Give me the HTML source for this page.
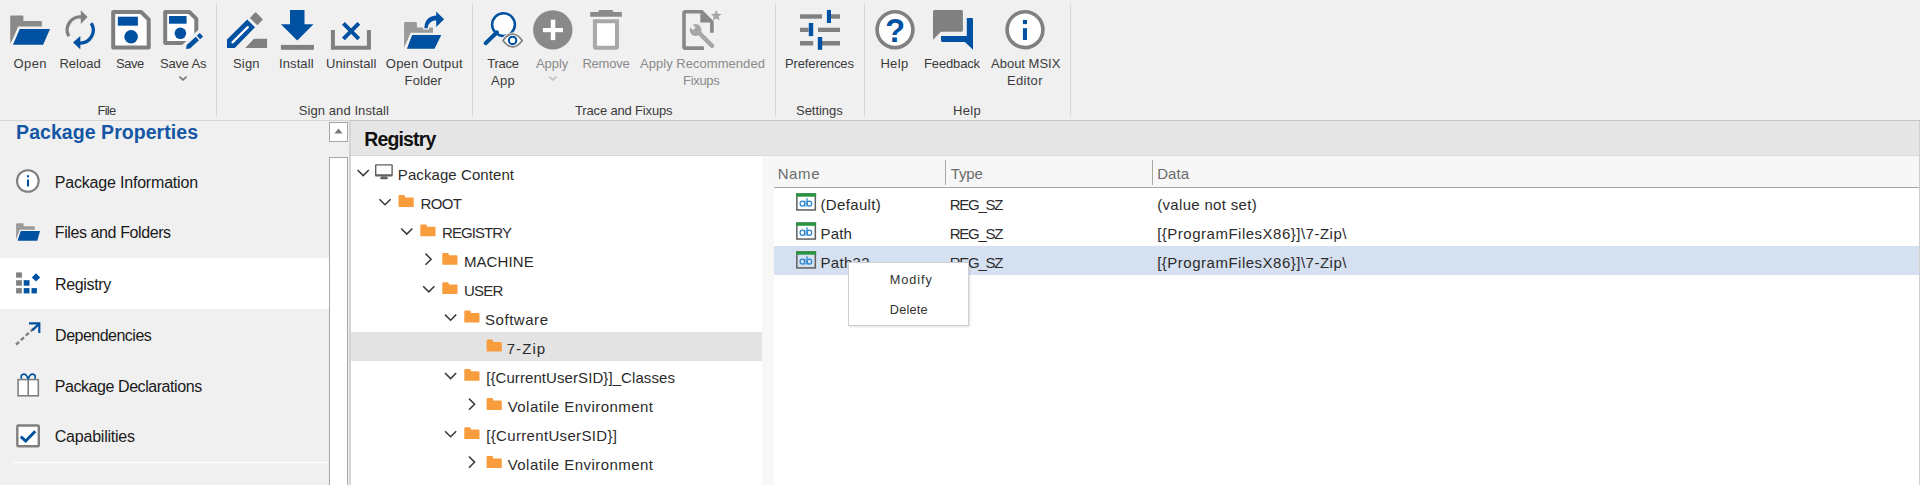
<!DOCTYPE html>
<html><head><meta charset="utf-8"><style>
html,body{margin:0;padding:0;}
body{width:1920px;height:485px;overflow:hidden;position:relative;background:#f0f0f0;font-family:"Liberation Sans", sans-serif;}
.b{position:absolute;}
.t{position:absolute;white-space:pre;font-family:"Liberation Sans", sans-serif;}
</style></head><body>
<!-- ribbon -->
<div class=b style="left:0;top:120px;width:349px;height:1px;background:#d6d6d6"></div>
<div class=b style="left:349px;top:120px;width:1571px;height:1px;background:#c6c6c6"></div>
<div class=b style="left:216px;top:4px;width:1px;height:112px;background:#d6d6d6"></div>
<div class=b style="left:472px;top:4px;width:1px;height:112px;background:#d6d6d6"></div>
<div class=b style="left:775px;top:4px;width:1px;height:112px;background:#d6d6d6"></div>
<div class=b style="left:864px;top:4px;width:1px;height:112px;background:#d6d6d6"></div>
<div class=b style="left:1070px;top:4px;width:1px;height:112px;background:#d6d6d6"></div>
<!-- left panel -->
<div class=b style="left:0;top:258px;width:329px;height:51px;background:#fff"></div>
<div class=b style="left:12px;top:462px;width:316px;height:1px;background:#fff"></div>
<!-- scrollbar -->
<div class=b style="left:329px;top:122px;width:17px;height:18px;background:#fff;border:1px solid #a6a6a6"></div>
<div class=b style="left:329px;top:157px;width:17px;height:340px;background:#fff;border:1px solid #a6a6a6"></div>
<div class=b style="left:349px;top:121px;width:2px;height:364px;background:#d4d4d4"></div>
<!-- header -->
<div class=b style="left:351px;top:121px;width:1568px;height:35px;background:#e6e6e6"></div>
<div class=b style="left:351px;top:155px;width:1568px;height:1px;background:#dadada"></div>
<!-- tree -->
<div class=b style="left:351px;top:156px;width:411px;height:329px;background:#fff"></div>
<div class=b style="left:351px;top:332px;width:411px;height:29px;background:#e3e3e3"></div>
<div class=b style="left:762px;top:156px;width:12px;height:329px;background:#f7f7f7"></div>
<!-- list -->
<div class=b style="left:774px;top:156px;width:1145px;height:31px;background:#f7f7f7"></div>
<div class=b style="left:774px;top:187px;width:1145px;height:1px;background:#a8a8a8"></div>
<div class=b style="left:945px;top:160px;width:1px;height:25px;background:#a8a8a8"></div>
<div class=b style="left:1152px;top:160px;width:1px;height:25px;background:#a8a8a8"></div>
<div class=b style="left:774px;top:188px;width:1145px;height:297px;background:#fff"></div>
<div class=b style="left:774px;top:246px;width:1145px;height:29px;background:#d5e0f1"></div>
<div class=b style="left:1919px;top:121px;width:1px;height:364px;background:#cfcfcf"></div>
<div class=t style="left:13.40px;top:57.00px;font-size:13px;line-height:13px;letter-spacing:0.467px;color:#3b3b3b;">Open</div>
<div class=t style="left:59.40px;top:57.00px;font-size:13px;line-height:13px;letter-spacing:0.040px;color:#3b3b3b;">Reload</div>
<div class=t style="left:116.00px;top:57.00px;font-size:13px;line-height:13px;letter-spacing:-0.467px;color:#3b3b3b;">Save</div>
<div class=t style="left:160.00px;top:57.00px;font-size:13px;line-height:13px;letter-spacing:-0.217px;color:#3b3b3b;">Save As</div>
<div class=t style="left:233.00px;top:57.00px;font-size:13px;line-height:13px;letter-spacing:0.167px;color:#3b3b3b;">Sign</div>
<div class=t style="left:279.00px;top:57.00px;font-size:13px;line-height:13px;letter-spacing:0.100px;color:#3b3b3b;">Install</div>
<div class=t style="left:326.00px;top:57.00px;font-size:13px;line-height:13px;letter-spacing:0.062px;color:#3b3b3b;">Uninstall</div>
<div class=t style="left:385.80px;top:57.00px;font-size:13px;line-height:13px;letter-spacing:0.240px;color:#3b3b3b;">Open Output</div>
<div class=t style="left:404.60px;top:74.00px;font-size:13px;line-height:13px;letter-spacing:0.100px;color:#3b3b3b;">Folder</div>
<div class=t style="left:487.30px;top:57.00px;font-size:13px;line-height:13px;letter-spacing:-0.275px;color:#3b3b3b;">Trace</div>
<div class=t style="left:491.00px;top:74.00px;font-size:13px;line-height:13px;letter-spacing:0.300px;color:#3b3b3b;">App</div>
<div class=t style="left:536.00px;top:57.00px;font-size:13px;line-height:13px;letter-spacing:-0.075px;color:#8a8a8a;">Apply</div>
<div class=t style="left:582.40px;top:57.00px;font-size:13px;line-height:13px;letter-spacing:-0.220px;color:#8a8a8a;">Remove</div>
<div class=t style="left:640.00px;top:57.00px;font-size:13px;line-height:13px;letter-spacing:0.037px;color:#8a8a8a;">Apply Recommended</div>
<div class=t style="left:683.00px;top:74.00px;font-size:13px;line-height:13px;letter-spacing:-0.300px;color:#8a8a8a;">Fixups</div>
<div class=t style="left:785.00px;top:57.00px;font-size:13px;line-height:13px;letter-spacing:-0.120px;color:#3b3b3b;">Preferences</div>
<div class=t style="left:880.40px;top:57.00px;font-size:13px;line-height:13px;letter-spacing:0.333px;color:#3b3b3b;">Help</div>
<div class=t style="left:924.00px;top:57.00px;font-size:13px;line-height:13px;letter-spacing:-0.143px;color:#3b3b3b;">Feedback</div>
<div class=t style="left:991.00px;top:57.00px;font-size:13px;line-height:13px;letter-spacing:0.000px;color:#3b3b3b;">About MSIX</div>
<div class=t style="left:1007.00px;top:74.00px;font-size:13px;line-height:13px;letter-spacing:0.300px;color:#3b3b3b;">Editor</div>
<div class=t style="left:97.50px;top:104.00px;font-size:13px;line-height:13px;letter-spacing:-0.767px;color:#3b3b3b;">File</div>
<div class=t style="left:298.70px;top:104.00px;font-size:13px;line-height:13px;letter-spacing:0.087px;color:#3b3b3b;">Sign and Install</div>
<div class=t style="left:575.00px;top:104.00px;font-size:13px;line-height:13px;letter-spacing:-0.160px;color:#3b3b3b;">Trace and Fixups</div>
<div class=t style="left:796.00px;top:104.00px;font-size:13px;line-height:13px;letter-spacing:-0.043px;color:#3b3b3b;">Settings</div>
<div class=t style="left:953.00px;top:104.00px;font-size:13px;line-height:13px;letter-spacing:0.333px;color:#3b3b3b;">Help</div>
<div class=t style="left:16.10px;top:123.09px;font-size:19.5px;line-height:19.5px;letter-spacing:0.053px;color:#1457a6;font-weight:700;">Package Properties</div>
<div class=t style="left:54.80px;top:174.96px;font-size:16px;line-height:16px;letter-spacing:-0.194px;color:#1a1a1a;">Package Information</div>
<div class=t style="left:54.80px;top:225.46px;font-size:16px;line-height:16px;letter-spacing:-0.400px;color:#1a1a1a;">Files and Folders</div>
<div class=t style="left:55.10px;top:277.06px;font-size:16px;line-height:16px;letter-spacing:-0.371px;color:#1a1a1a;">Registry</div>
<div class=t style="left:55.10px;top:327.66px;font-size:16px;line-height:16px;letter-spacing:-0.509px;color:#1a1a1a;">Dependencies</div>
<div class=t style="left:54.80px;top:378.66px;font-size:16px;line-height:16px;letter-spacing:-0.437px;color:#1a1a1a;">Package Declarations</div>
<div class=t style="left:54.80px;top:429.26px;font-size:16px;line-height:16px;letter-spacing:-0.227px;color:#1a1a1a;">Capabilities</div>
<div class=t style="left:364.20px;top:129.99px;font-size:19.5px;line-height:19.5px;letter-spacing:-0.843px;color:#111;font-weight:700;">Registry</div>
<div class=t style="left:397.80px;top:167.00px;font-size:15px;line-height:15px;letter-spacing:0.079px;color:#2b2b2b;">Package Content</div>
<div class=t style="left:420.40px;top:195.90px;font-size:15px;line-height:15px;letter-spacing:-0.567px;color:#2b2b2b;">ROOT</div>
<div class=t style="left:442.00px;top:224.90px;font-size:15px;line-height:15px;letter-spacing:-0.929px;color:#2b2b2b;">REGISTRY</div>
<div class=t style="left:463.90px;top:253.60px;font-size:15px;line-height:15px;letter-spacing:0.117px;color:#2b2b2b;">MACHINE</div>
<div class=t style="left:463.90px;top:282.90px;font-size:15px;line-height:15px;letter-spacing:-0.767px;color:#2b2b2b;">USER</div>
<div class=t style="left:485.00px;top:311.80px;font-size:15px;line-height:15px;letter-spacing:0.543px;color:#2b2b2b;">Software</div>
<div class=t style="left:506.70px;top:340.70px;font-size:15px;line-height:15px;letter-spacing:1.075px;color:#2b2b2b;">7-Zip</div>
<div class=t style="left:486.20px;top:370.10px;font-size:15px;line-height:15px;letter-spacing:0.080px;color:#2b2b2b;">[{CurrentUserSID}]_Classes</div>
<div class=t style="left:507.70px;top:399.10px;font-size:15px;line-height:15px;letter-spacing:0.447px;color:#2b2b2b;">Volatile Environment</div>
<div class=t style="left:486.20px;top:428.30px;font-size:15px;line-height:15px;letter-spacing:0.335px;color:#2b2b2b;">[{CurrentUserSID}]</div>
<div class=t style="left:507.70px;top:457.10px;font-size:15px;line-height:15px;letter-spacing:0.447px;color:#2b2b2b;">Volatile Environment</div>
<div class=t style="left:777.70px;top:166.20px;font-size:15px;line-height:15px;letter-spacing:0.600px;color:#6b6b6b;">Name</div>
<div class=t style="left:950.80px;top:166.20px;font-size:15px;line-height:15px;letter-spacing:-0.133px;color:#6b6b6b;">Type</div>
<div class=t style="left:1157.20px;top:166.20px;font-size:15px;line-height:15px;letter-spacing:0.067px;color:#6b6b6b;">Data</div>
<div class=t style="left:820.50px;top:196.80px;font-size:15px;line-height:15px;letter-spacing:0.350px;color:#2b2b2b;">(Default)</div>
<div class=t style="left:820.50px;top:225.70px;font-size:15px;line-height:15px;letter-spacing:0.167px;color:#2b2b2b;">Path</div>
<div class=t style="left:820.50px;top:254.60px;font-size:15px;line-height:15px;letter-spacing:0.300px;color:#2b2b2b;">Path32</div>
<div class=t style="left:949.80px;top:196.80px;font-size:15px;line-height:15px;letter-spacing:-1.280px;color:#2b2b2b;">REG_SZ</div>
<div class=t style="left:949.80px;top:225.70px;font-size:15px;line-height:15px;letter-spacing:-1.280px;color:#2b2b2b;">REG_SZ</div>
<div class=t style="left:949.80px;top:254.60px;font-size:15px;line-height:15px;letter-spacing:-1.280px;color:#2b2b2b;">REG_SZ</div>
<div class=t style="left:1157.20px;top:196.80px;font-size:15px;line-height:15px;letter-spacing:0.321px;color:#2b2b2b;">(value not set)</div>
<div class=t style="left:1157.20px;top:225.70px;font-size:15px;line-height:15px;letter-spacing:0.500px;color:#2b2b2b;">[{ProgramFilesX86}]\7-Zip\</div>
<div class=t style="left:1157.20px;top:254.60px;font-size:15px;line-height:15px;letter-spacing:0.500px;color:#2b2b2b;">[{ProgramFilesX86}]\7-Zip\</div>
<svg class=b style="left:0;top:0" width="1920" height="485" viewBox="0 0 1920 485">
<defs>
<g id="fold"><path d="M0 1.2 Q0 0 1.2 0 L5.6 0 Q6.2 0 6.4 0.8 L6.6 2.4 L14 2.4 Q15.2 2.4 15.2 3.6 L15.2 11.9 L0 11.9 Z" fill="#f99c3e"/></g>
<g id="chd"><path d="M0 0 L5.6 5.6 L11.2 0" fill="none" stroke="#383838" stroke-width="1.5"/></g>
<g id="chr"><path d="M0 0 L5.6 5.6 L0 11.2" fill="none" stroke="#383838" stroke-width="1.5"/></g>
<g id="ab"><rect x="0.75" y="0.75" width="18.5" height="15.9" fill="none" stroke="#5e5e5e" stroke-width="1.5"/><rect x="0" y="0" width="20" height="3.4" fill="#2a9440"/><g fill="none" stroke="#2d86cf" stroke-width="1.25"><ellipse cx="6.3" cy="10.3" rx="2.3" ry="2.6"/><path d="M8.7 7.5 L8.7 13.3"/><path d="M10.9 4.9 L10.9 13.3"/><ellipse cx="13.3" cy="10.3" rx="2.3" ry="2.6"/></g></g>
</defs>
<!-- ===== Ribbon icons ===== -->
<!-- Open -->
<path d="M10.2 43.7 L10.2 16.6 Q10.2 15.6 11.2 15.6 L22.6 15.6 Q23.4 15.6 23.4 16.4 L23.4 21 L40.9 21 Q41.9 21 41.9 22 L41.9 27 L19 27 Z" fill="#8a8a8a"/>
<path d="M13 44.7 L19.7 28.9 L50 28.9 L43.1 44.7 Z" fill="#0051a1"/>
<path d="M11.2 45.5 L18.6 27.4 L41.9 27.4" fill="none" stroke="#f0f0f0" stroke-width="1.6"/>
<!-- Reload -->
<path d="M68.8 36.2 A13 13 0 0 1 81.5 17" fill="none" stroke="#808080" stroke-width="3.3"/>
<path d="M80.8 10.2 L87.6 17 L80.8 24 Z" fill="#808080"/>
<path d="M91.2 23.05 A13 13 0 0 1 79.5 43" fill="none" stroke="#0051a1" stroke-width="3.3"/>
<path d="M80.3 35.9 L73 42.6 L80.3 49.3 Z" fill="#0051a1"/>
<!-- Save -->
<path d="M113.2 12.1 L141.3 12.1 L148.7 19.5 L148.7 47.6 L113.2 47.6 Z" fill="#fff" stroke="#7f7f7f" stroke-width="4" stroke-linejoin="round"/>
<rect x="117.8" y="16.7" width="20.1" height="9" fill="#0051a1"/>
<circle cx="131.1" cy="36.7" r="6.8" fill="#0051a1"/>
<!-- Save As -->
<path d="M165.2 12.1 L189.5 12.1 L196.3 18.9 L196.3 42.9 L165.2 42.9 Z" fill="#fff" stroke="#7f7f7f" stroke-width="4" stroke-linejoin="round"/>
<rect x="169" y="16" width="17.6" height="7.7" fill="#0051a1"/>
<circle cx="180.4" cy="33.3" r="5.8" fill="#0051a1"/>
<path d="M182.5 51.5 L204 31.5" stroke="#f0f0f0" stroke-width="10"/><path d="M192 46.5 L199 46.5 L199 39 Z" fill="#f0f0f0"/>
<path d="M186 49 L186.72 45.06 L195.73 36.7 L198.99 40.22 L189.98 48.58 Z" fill="#0051a1"/>
<path d="M200.09 39.2 L196.83 35.68 L199.76 32.96 L203.02 36.48 Z" fill="#0051a1"/>
<!-- Sign -->
<path d="M227 47.9 L227 39.6 L247.2 19.4 L255 27.2 L234.8 47.9 Z" fill="#0051a1"/>
<path d="M232.5 42.4 L247.8 27.1" stroke="#fff" stroke-width="2.2" stroke-linecap="round"/>
<path d="M255.1 12.6 Q255.6 12.2 256.1 12.6 L262.5 19 Q262.9 19.5 262.5 20 L257.8 24.8 Q257.3 25.2 256.8 24.8 L250.4 18.4 Q250 17.9 250.4 17.4 Z" fill="#808080"/>
<path d="M245.2 47.9 L254 38.8 L267.1 38.8 L267.1 47.9 Z" fill="#808080"/>
<!-- Install -->
<path d="M290 10.1 L304.5 10.1 L304.5 24.3 L313.5 24.3 L297.3 40.4 L280.9 24.3 L290 24.3 Z" fill="#0051a1"/>
<rect x="280.9" y="44.9" width="33" height="4.9" fill="#808080"/>
<!-- Uninstall -->
<path d="M332.9 30 L332.9 47.8 L368.9 47.8 L368.9 30" fill="none" stroke="#808080" stroke-width="4"/>
<path d="M343.4 23.4 L358.8 38.8 M358.8 23.4 L343.4 38.8" stroke="#0051a1" stroke-width="4"/>
<!-- Open Output Folder -->
<path d="M404.1 47.5 L404.1 23 Q404.1 22 405.1 22 L416 22 Q416.9 22 416.9 22.9 L416.9 27.5 L432 27.5 Q433 27.5 433 28.5 L433 33.4 L410.5 33.4 Z" fill="#9a9a9a"/>
<path d="M406.9 48.7 L412.1 35.1 L441.3 35.1 L434.5 48.7 Z" fill="#0051a1"/>
<path d="M405.4 49.3 L411.2 33.6 L433 33.6" fill="none" stroke="#f0f0f0" stroke-width="1.6"/>
<path d="M423 29.4 Q423.2 14.5 437 14 L437 21.6 Q429.6 21.8 428.8 29.4 Z" fill="#f0f0f0"/>
<path d="M424.4 28.2 Q424.6 15.8 437 15.4 L437 20.2 Q428.4 20.5 427.5 28.2 Z" fill="#0051a1"/>
<path d="M436.2 11.6 L444.1 19.2 L436.2 27.1 Z" fill="#0051a1"/>
<!-- Trace App -->
<circle cx="503.5" cy="24.6" r="11.4" fill="#fff" stroke="#0051a1" stroke-width="2.5"/>
<path d="M485.6 43.2 L497 32.3" stroke="#0051a1" stroke-width="4" stroke-linecap="round"/>
<path d="M500 40.4 Q512.6 24.6 525.2 40.4 Q512.6 56.2 500 40.4 Z" fill="#f0f0f0"/>
<path d="M503 40.4 Q512.6 27.6 522.2 40.4 Q512.6 53.2 503 40.4 Z" fill="#fff" stroke="#808080" stroke-width="1.7"/>
<circle cx="512.6" cy="40.4" r="3.7" fill="#fff" stroke="#0051a1" stroke-width="2.1"/>
<!-- Apply (disabled) -->
<circle cx="552.8" cy="29.9" r="19.7" fill="#898989"/>
<rect x="542.9" y="28" width="20.1" height="4.2" fill="#fff"/>
<rect x="550.8" y="19.7" width="4.5" height="20.4" fill="#fff"/>
<!-- Remove (disabled) -->
<path d="M590.2 12 L598.2 12 L599.2 10.1 L612.5 10.1 L613.5 12 L621.8 12 L621.8 16.7 L590.2 16.7 Z" fill="#8a8a8a"/>
<path d="M594.9 21.2 L594.9 46.8 Q594.9 47.8 595.9 47.8 L616 47.8 Q617 47.8 617 46.8 L617 21.2 Z" fill="#fff" stroke="#a8a8a8" stroke-width="4"/>
<!-- Apply Recommended Fixups (disabled) -->
<path d="M703.9 48.1 L685.2 48.1 Q684 48.1 684 46.9 L684 12.9 Q684 11.7 685.2 11.7 L701.6 11.7 L711.9 22 L711.9 32.8" fill="none" stroke="#888" stroke-width="3.6"/>
<path d="M700.3 13 L700.3 22.5 L710.5 22.5 Z" fill="#888"/>
<path d="M712.1 45.9 L697.5 31.3" stroke="#a6a6a6" stroke-width="4.4" stroke-linecap="round"/>
<circle cx="695.6" cy="30" r="5.9" fill="#a6a6a6"/><path d="M694.3 28.7 L689 23.4" stroke="#f0f0f0" stroke-width="3.6"/>
<path d="M716.20 10.10 L717.73 13.70 L721.62 14.04 L718.67 16.60 L719.55 20.41 L716.20 18.40 L712.85 20.41 L713.73 16.60 L710.78 14.04 L714.67 13.70 Z" fill="#a6a6a6"/>
<!-- Preferences -->
<g fill="#808080">
<rect x="800" y="14.3" width="22" height="4.4"/><rect x="831" y="14.3" width="9" height="4.4"/>
<rect x="800" y="27.7" width="8.6" height="4.3"/><rect x="818" y="27.7" width="22" height="4.3"/>
<rect x="800" y="41" width="13.2" height="4.5"/><rect x="822" y="41" width="18" height="4.5"/>
</g>
<g fill="#0051a1">
<rect x="826.9" y="9.9" width="4.1" height="13.1"/>
<rect x="808.8" y="23" width="4.4" height="13.1"/>
<rect x="817.8" y="37" width="4.4" height="12.8"/>
</g>
<!-- Help -->
<circle cx="895" cy="29.7" r="17.9" fill="#fff" stroke="#808080" stroke-width="3.6"/>
<text x="895.2" y="41.8" text-anchor="middle" font-family="Liberation Sans" font-weight="700" font-size="32.5" fill="#0051a1">?</text>
<!-- Feedback -->
<path d="M934.5 9.9 L961.4 9.9 Q962.9 9.9 962.9 11.4 L962.9 30.3 Q962.9 31.8 961.4 31.8 L941 31.8 L933 39.8 L933 11.4 Q933 9.9 934.5 9.9 Z" fill="#808080"/>
<path d="M966.8 17.9 L971.6 17.9 Q973 17.9 973 19.3 L973 49.8 L964.9 41.9 L942.4 41.9 Q941 41.9 941 40.5 L941 35.9 L966.8 35.9 Z" fill="#0051a1"/>
<!-- About -->
<circle cx="1025" cy="29.7" r="17.9" fill="#fff" stroke="#808080" stroke-width="3.6"/>
<rect x="1022.9" y="19.9" width="4.1" height="4.2" fill="#0051a1"/>
<rect x="1022.9" y="28.2" width="4.1" height="11.8" fill="#0051a1"/>
<!-- ribbon dropdown chevrons -->
<path d="M179.4 76.6 L183 79.9 L186.6 76.6" fill="none" stroke="#777" stroke-width="1.6"/>
<path d="M549.3 76.6 L552.9 79.9 L556.5 76.6" fill="none" stroke="#c2c2c2" stroke-width="1.6"/>
<!-- ===== scroll up arrow ===== -->
<path d="M334.4 133.5 L338.5 128.6 L342.6 133.5 Z" fill="#7a7a7a"/>
<!-- ===== left panel icons ===== -->
<circle cx="27.85" cy="181" r="10.8" fill="#fff" stroke="#808080" stroke-width="2.1"/>
<rect x="27" y="175.2" width="2" height="2.2" fill="#0051a1"/>
<rect x="27" y="179.5" width="2" height="7" fill="#0051a1"/>
<path d="M16.1 240 L16.1 223.9 Q16.1 223.2 16.8 223.2 L23 223.2 Q23.6 223.2 23.6 223.8 L23.6 226.2 L34.1 226.2 Q34.8 226.2 34.8 226.9 L34.8 230 L20 230 Z" fill="#9a9a9a"/>
<path d="M17.4 240.7 L20.7 231.1 L40 231.1 L37.3 240.7 Z" fill="#0051a1"/>
<path d="M16.6 241.2 L20.1 230.2 L34.8 230.2" fill="none" stroke="#f0f0f0" stroke-width="1.1"/>
<!-- registry icon -->
<g fill="#808080"><rect x="16.1" y="272.4" width="5.8" height="5.3"/><rect x="16.1" y="280.2" width="5.8" height="5.5"/><rect x="16.1" y="288.1" width="5.8" height="5.3"/></g>
<g fill="#0051a1"><rect x="23.7" y="280.2" width="5.8" height="5.5"/><rect x="23.7" y="288.1" width="5.8" height="5.3"/><rect x="31.5" y="288.1" width="5.4" height="5.3"/>
<path d="M36 273.2 L40.2 277.4 L36 281.6 L31.8 277.4 Z"/></g>
<!-- dependencies -->
<path d="M16 344.6 L34.2 328" stroke="#808080" stroke-width="2.4" stroke-dasharray="4.2 2.4"/>
<path d="M29 323.4 L39.3 323.4 L39.3 333" fill="none" stroke="#0051a1" stroke-width="2.2"/>
<path d="M39.3 323.4 L32.5 330.2" stroke="#0051a1" stroke-width="2.2"/>
<!-- package declarations -->
<rect x="18.1" y="379.6" width="20.2" height="16.2" fill="#fff" stroke="#808080" stroke-width="1.6"/>
<path d="M28.2 379.6 L28.2 395.8" stroke="#808080" stroke-width="1.6"/>
<path d="M28.2 379.2 Q26.5 373.6 23 374.3 Q20.2 375.2 21.6 378.8 M28.2 379.2 Q29.9 373.6 33.4 374.3 Q36.2 375.2 34.8 378.8" fill="none" stroke="#0051a1" stroke-width="1.7"/>
<!-- capabilities -->
<rect x="17.3" y="425.5" width="21.5" height="20.7" rx="1" fill="#fff" stroke="#808080" stroke-width="2.4"/>
<path d="M20.8 436.6 L25.7 441 L35.2 431.2" fill="none" stroke="#0051a1" stroke-width="3"/>
<!-- ===== tree ===== -->
<use href="#chd" x="357.6" y="170"/>
<g fill="#606060"><path d="M376 164.2 L391.8 164.2 Q392.8 164.2 392.8 165.2 L392.8 175.6 Q392.8 176.6 391.8 176.6 L376 176.6 Q375 176.6 375 175.6 L375 165.2 Q375 164.2 376 164.2 Z M376.4 165.6 L376.4 174.2 L391.4 174.2 L391.4 165.6 Z" fill-rule="evenodd"/><path d="M381.2 176.6 L386.9 176.6 L387.9 178.3 Q388 179.3 387 179.3 L381 179.3 Q380 179.3 380.2 178.3 Z"/></g>
<use href="#chd" x="379.4" y="199.2"/>
<use href="#fold" x="398.5" y="195"/>
<use href="#chd" x="401.2" y="228.5"/>
<use href="#fold" x="420.3" y="224.4"/>
<use href="#chr" x="425.5" y="253.6"/>
<use href="#fold" x="442.3" y="252.9"/>
<use href="#chd" x="423.2" y="286.3"/>
<use href="#fold" x="442.3" y="282.2"/>
<use href="#chd" x="445" y="314.6"/>
<use href="#fold" x="464.3" y="310.6"/>
<use href="#fold" x="486.6" y="339.6"/>
<use href="#chd" x="445" y="373"/>
<use href="#fold" x="464.3" y="368.9"/>
<use href="#chr" x="469" y="398.6"/>
<use href="#fold" x="486.6" y="398"/>
<use href="#chd" x="445" y="431.2"/>
<use href="#fold" x="464.3" y="427.2"/>
<use href="#chr" x="469" y="456.5"/>
<use href="#fold" x="486.6" y="456"/>
<!-- ===== list icons ===== -->
<use href="#ab" x="796.1" y="193.3"/>
<use href="#ab" x="796.1" y="222.4"/>
<use href="#ab" x="796.1" y="251.3"/>
</svg>

<!-- context menu -->
<div class=b style="left:848px;top:262px;width:119px;height:62px;background:#fff;border:1px solid #cfcfcf;box-shadow:1px 1px 2px rgba(0,0,0,0.12)">
<div class=t style="left:40.80px;top:11.35px;font-size:12.7px;line-height:12.7px;letter-spacing:0.940px;color:#333;">Modify</div>
<div class=t style="left:40.80px;top:41.35px;font-size:12.7px;line-height:12.7px;letter-spacing:0.200px;color:#333;">Delete</div>
</div>
</body></html>
